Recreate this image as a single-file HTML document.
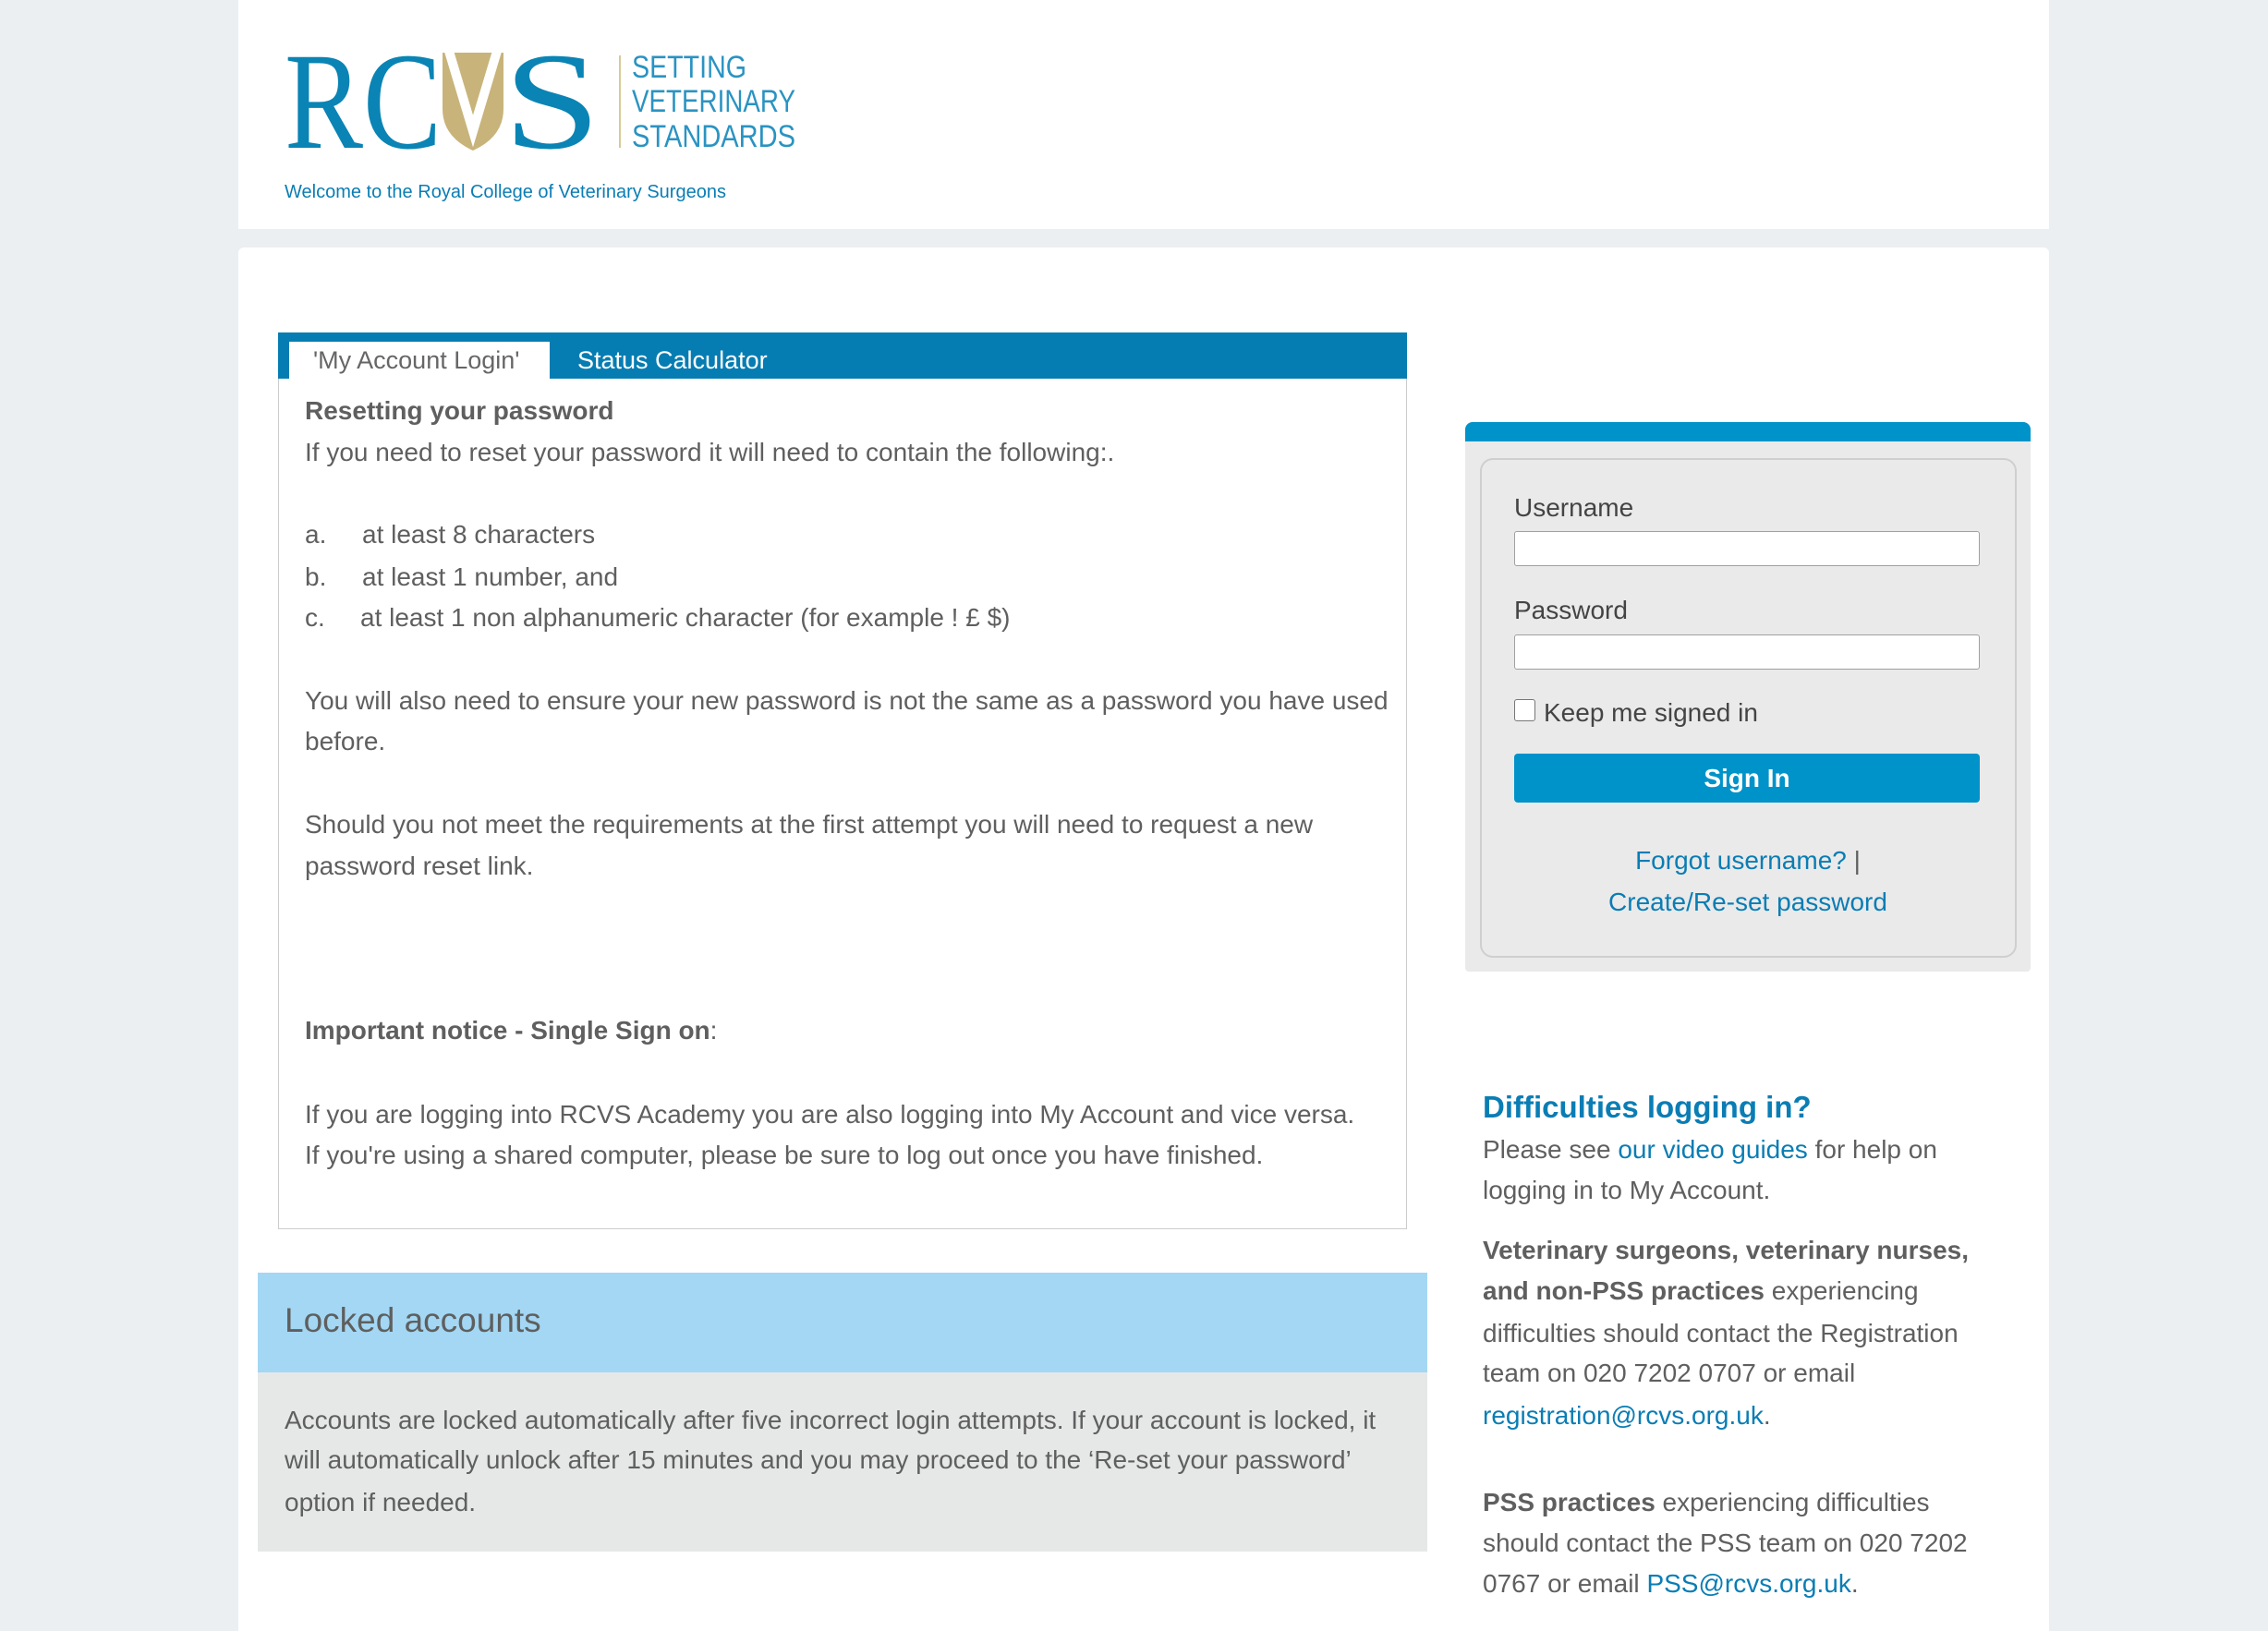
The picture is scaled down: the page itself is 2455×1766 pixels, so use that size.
<!DOCTYPE html>
<html><head><meta charset="utf-8">
<style>
body{margin:0;width:2455px;height:1766px;background:#ebeff2;position:relative;overflow:hidden;font-family:"Liberation Sans",Arial,sans-serif;color:#5f5f5f}
.a{position:absolute}
.t{position:absolute;font-size:28px;line-height:44px;white-space:nowrap;color:#5f5f5f}
b{color:#5f5f5f}
.l{color:#0a7db4}
</style></head><body>
<div class="a" style="left:258px;top:0;width:1960px;height:248px;background:#fff"></div>
<div class="a" style="left:258px;top:268px;width:1960px;height:1498px;background:#fff;border-radius:6px 6px 0 0"></div>

<svg class="a" style="left:0;top:0" width="900" height="240">
<text x="308" y="160" font-family="Liberation Serif" font-size="150" fill="#0a84b4" textLength="170" lengthAdjust="spacingAndGlyphs">RC</text>
<path d="M479 57 L545 57 L545 118 Q545 148 512 163 Q479 148 479 118 Z" fill="#c8b47a"/>
<polyline points="485,52 512,142 539,52" fill="none" stroke="#fff" stroke-width="10"/>
<text x="545" y="160" font-family="Liberation Serif" font-size="150" fill="#0a84b4" textLength="105" lengthAdjust="spacingAndGlyphs">S</text>
<rect x="670" y="60" width="2" height="100" fill="#d9c99a"/>
<text font-family="Liberation Sans" font-size="34" fill="#2a93c2"><tspan x="684" y="84" textLength="124" lengthAdjust="spacingAndGlyphs">SETTING</tspan><tspan x="684" y="121" textLength="177" lengthAdjust="spacingAndGlyphs">VETERINARY</tspan><tspan x="684" y="159" textLength="177" lengthAdjust="spacingAndGlyphs">STANDARDS</tspan></text>
<text x="308" y="214" font-family="Liberation Sans" font-size="20" fill="#0a7db4" textLength="478" lengthAdjust="spacingAndGlyphs">Welcome to the Royal College of Veterinary Surgeons</text>
</svg>

<!-- tabs -->
<div class="a" style="left:301px;top:360px;width:1222px;height:50px;background:#067db2"></div>
<div class="a" style="left:313px;top:370px;width:282px;height:40px;background:#fff"></div>
<div class="t" style="left:339px;top:368px;font-size:27px;color:#666">'My Account Login'</div>
<div class="t" style="left:625px;top:368px;font-size:27px;color:#fff">Status Calculator</div>
<div class="a" style="left:301px;top:410px;width:1220px;height:920px;border:1px solid #ccc;border-top:none"></div>

<div class="t" style="left:330px;top:423px"><b>Resetting your password</b></div>
<div class="t" style="left:330px;top:468px">If you need to reset your password it will need to contain the following:.</div>
<div class="t" style="left:330px;top:557px">a.</div><div class="t" style="left:392px;top:557px">at least 8 characters</div>
<div class="t" style="left:330px;top:603px">b.</div><div class="t" style="left:392px;top:603px">at least 1 number, and</div>
<div class="t" style="left:330px;top:647px">c.</div><div class="t" style="left:390px;top:647px">at least 1 non alphanumeric character (for example ! £ $)</div>
<div class="t" style="left:330px;top:737px">You will also need to ensure your new password is not the same as a password you have used</div>
<div class="t" style="left:330px;top:781px">before.</div>
<div class="t" style="left:330px;top:871px">Should you not meet the requirements at the first attempt you will need to request a new</div>
<div class="t" style="left:330px;top:916px">password reset link.</div>
<div class="t" style="left:330px;top:1094px"><b>Important notice - Single Sign on</b>:</div>
<div class="t" style="left:330px;top:1185px">If you are logging into RCVS Academy you are also logging into My Account and vice versa.</div>
<div class="t" style="left:330px;top:1229px">If you're using a shared computer, please be sure to log out once you have finished.</div>

<!-- locked -->
<div class="a" style="left:279px;top:1378px;width:1266px;height:108px;background:#a3d7f3"></div>
<div class="a" style="left:279px;top:1486px;width:1266px;height:194px;background:#e6e8e8"></div>
<div class="t" style="left:308px;top:1408px;font-size:37px">Locked accounts</div>
<div class="t" style="left:308px;top:1516px">Accounts are locked automatically after five incorrect login attempts. If your account is locked, it</div>
<div class="t" style="left:308px;top:1559px">will automatically unlock after 15 minutes and you may proceed to the ‘Re-set your password’</div>
<div class="t" style="left:308px;top:1605px">option if needed.</div>

<!-- login -->
<div class="a" style="left:1586px;top:457px;width:612px;height:595px;background:#eaeaea;border-radius:8px 8px 4px 4px;overflow:hidden"><div style="height:21px;background:#0093c9"></div></div>
<div class="a" style="left:1602px;top:496px;width:577px;height:537px;border:2px solid #cfcfcf;border-radius:14px"></div>
<div class="t" style="left:1639px;top:528px;color:#444">Username</div>
<div class="a" style="left:1639px;top:575px;width:502px;height:36px;background:#fff;border:1px solid #a0a0a0;border-radius:3px"></div>
<div class="t" style="left:1639px;top:639px;color:#444">Password</div>
<div class="a" style="left:1639px;top:687px;width:502px;height:36px;background:#fff;border:1px solid #a0a0a0;border-radius:3px"></div>
<div class="a" style="left:1639px;top:757px;width:21px;height:22px;background:#fff;border:1px solid #777;border-radius:3px"></div>
<div class="t" style="left:1671px;top:750px;color:#444">Keep me signed in</div>
<div class="a" style="left:1639px;top:816px;width:504px;height:53px;background:#0093c9;border-radius:4px;color:#fff;font-weight:bold;font-size:28px;line-height:53px;text-align:center">Sign In</div>
<div class="t" style="left:1586px;width:612px;text-align:center;top:910px"><span class="l">Forgot username?</span> |</div>
<div class="t" style="left:1586px;width:612px;text-align:center;top:955px"><span class="l">Create/Re-set password</span></div>

<!-- difficulties -->
<div class="t" style="left:1605px;top:1177px;font-size:33px;font-weight:bold;color:#0a7db4">Difficulties logging in?</div>
<div class="t" style="left:1605px;top:1223px">Please see <span class="l">our video guides</span> for help on</div>
<div class="t" style="left:1605px;top:1267px">logging in to My Account.</div>
<div class="t" style="left:1605px;top:1332px"><b>Veterinary surgeons, veterinary nurses,</b></div>
<div class="t" style="left:1605px;top:1376px"><b>and non-PSS practices</b> experiencing</div>
<div class="t" style="left:1605px;top:1422px">difficulties should contact the Registration</div>
<div class="t" style="left:1605px;top:1465px">team on 020 7202 0707 or email</div>
<div class="t" style="left:1605px;top:1511px"><span class="l">registration@rcvs.org.uk</span>.</div>
<div class="t" style="left:1605px;top:1605px"><b>PSS practices</b> experiencing difficulties</div>
<div class="t" style="left:1605px;top:1649px">should contact the PSS team on 020 7202</div>
<div class="t" style="left:1605px;top:1693px">0767 or email <span class="l">PSS@rcvs.org.uk</span>.</div>
</body></html>
